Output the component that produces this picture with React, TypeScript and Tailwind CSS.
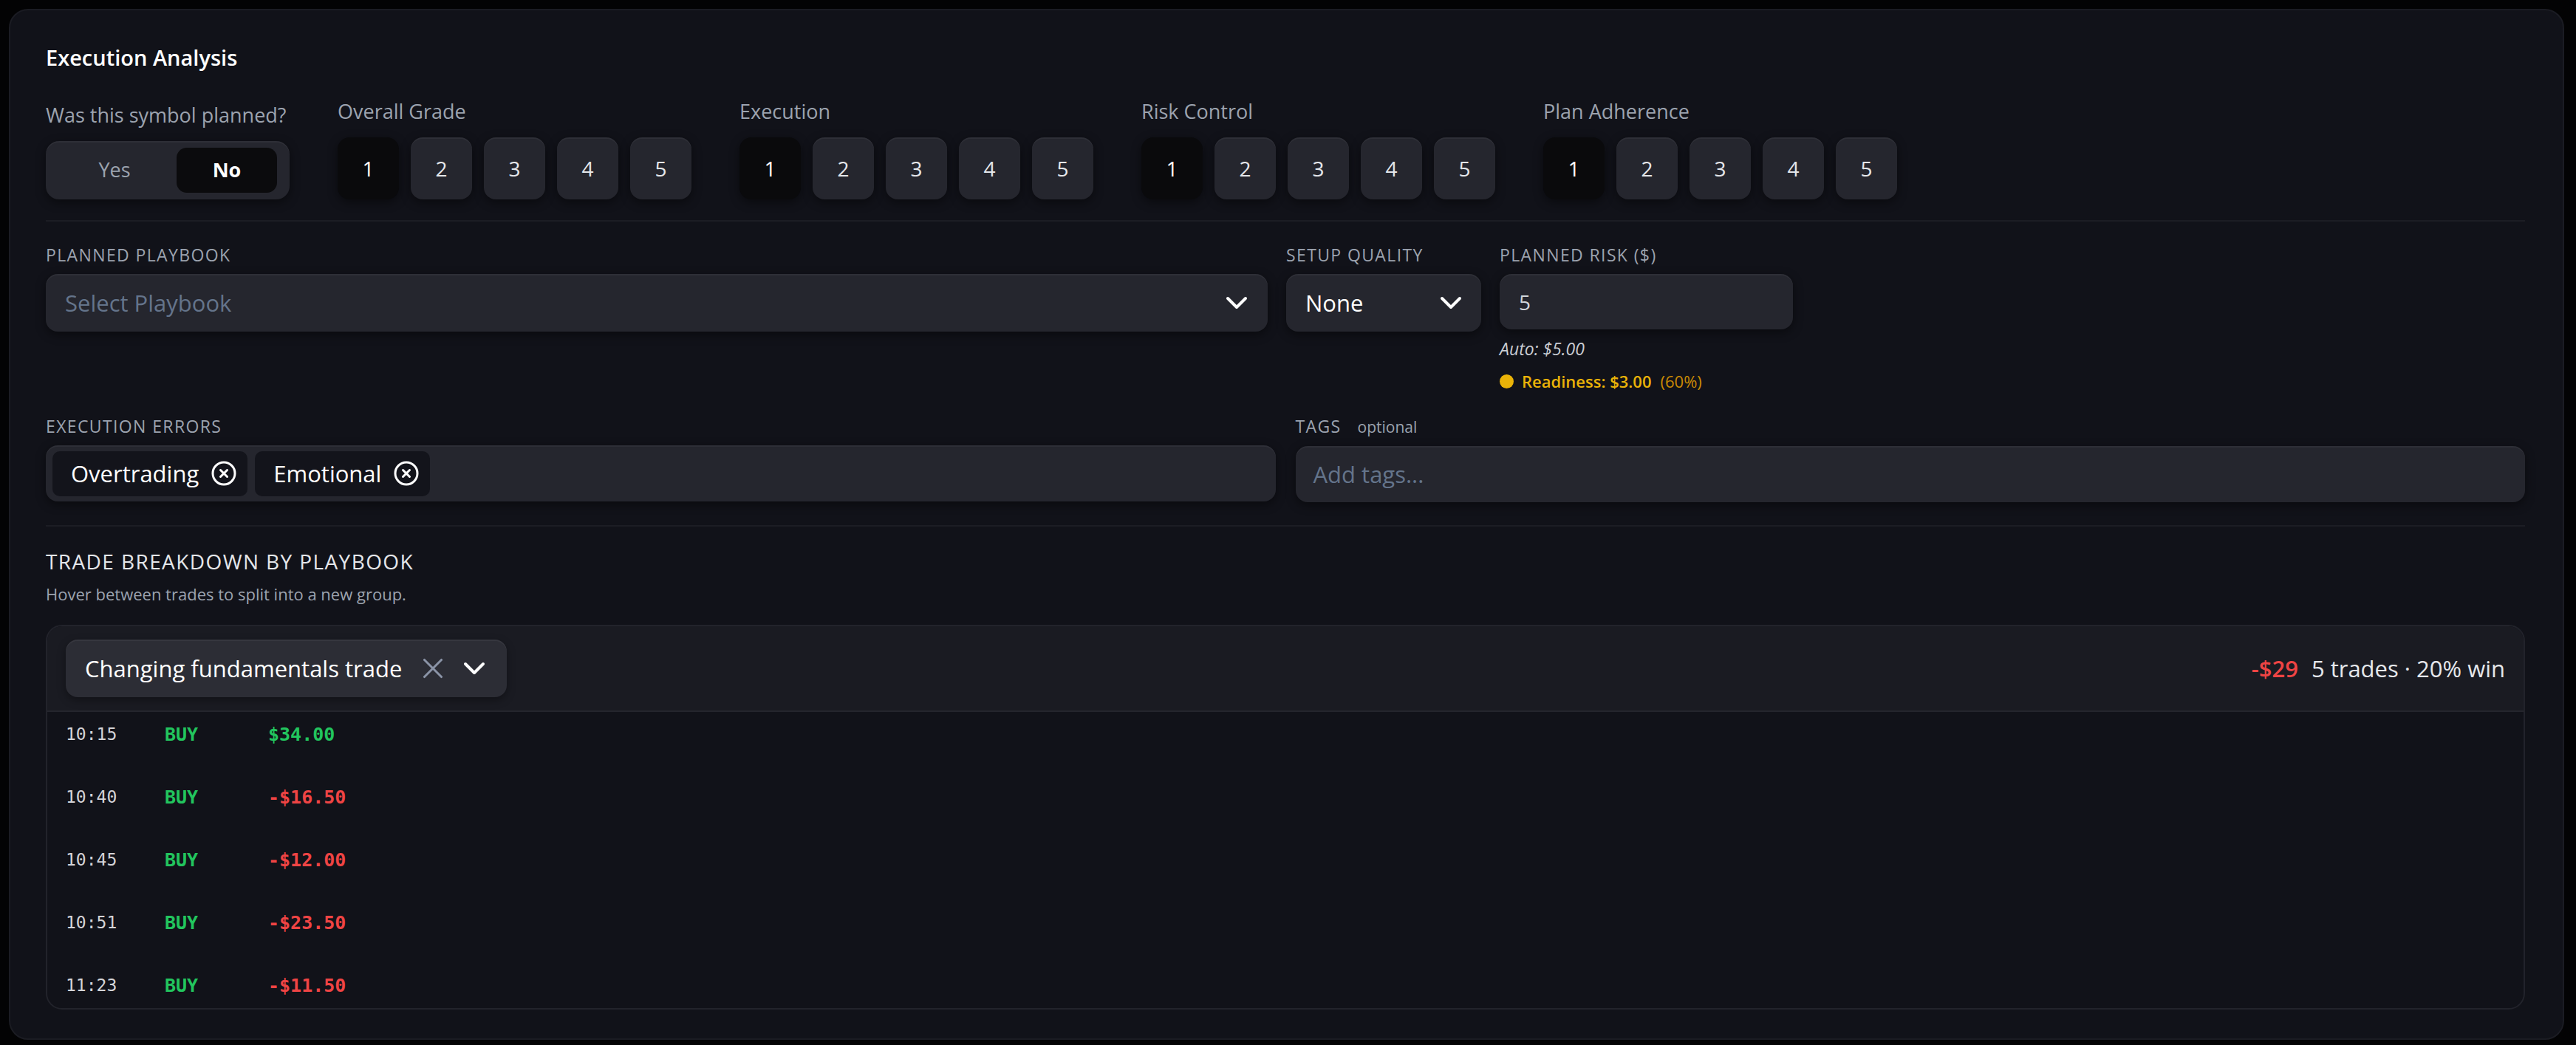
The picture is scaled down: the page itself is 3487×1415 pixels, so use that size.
import React from "react";
import { ChevronDown, X, CircleX } from "lucide-react";

const gradeGroups = ["Overall Grade", "Execution", "Risk Control", "Plan Adherence"];

const trades = [
  { time: "10:15", side: "BUY", pnl: "$34.00", win: true },
  { time: "10:40", side: "BUY", pnl: "-$16.50", win: false },
  { time: "10:45", side: "BUY", pnl: "-$12.00", win: false },
  { time: "10:51", side: "BUY", pnl: "-$23.50", win: false },
  { time: "11:23", side: "BUY", pnl: "-$11.50", win: false },
];

const fieldShadow =
  "shadow-[inset_0_2px_0_rgba(255,255,255,0.045),0_4px_14px_rgba(0,0,0,0.45)]";

const GradeScale: React.FC<{ label: string; selected: number }> = ({ label, selected }) => (
  <div className="flex flex-col">
    <span className="mb-[15px] text-[27px] leading-[40px] text-[#9ca3af]">{label}</span>
    <div className="flex gap-[16px]">
      {[1, 2, 3, 4, 5].map((n) => (
        <button
          key={n}
          type="button"
          className={
            n === selected
              ? "flex h-[84px] w-[83px] items-center justify-center rounded-[16px] bg-[#0a0a0c] text-[28px] font-medium text-white shadow-[0_4px_14px_rgba(0,0,0,0.45)]"
              : `flex h-[84px] w-[83px] items-center justify-center rounded-[16px] bg-[#25262e] text-[28px] font-medium text-[#e5e7eb] ${fieldShadow}`
          }
        >
          {n}
        </button>
      ))}
    </div>
  </div>
);

const FieldLabel: React.FC<{ children: React.ReactNode }> = ({ children }) => (
  <span className="mb-[10px] block text-[23px] uppercase leading-[32px] tracking-[0.06em] text-[#9ca3af]">
    {children}
  </span>
);

export default function App() {
  return (
    <div className="min-h-screen bg-[#030304] pb-[8px] pl-[12px] pr-[16px] pt-[12px] font-['Open_Sans',sans-serif]">
      <div className="rounded-[26px] border-2 border-[#1b1c23] bg-[#111219] pb-[39px] pl-[48px] pr-[51px] pt-[44px]">
        <h2 className="text-[29px] font-semibold leading-[40px] text-white">Execution Analysis</h2>

        {/* planned + grades */}
        <div className="mt-[33px] flex items-end gap-[65px]">
          <div className="flex flex-col">
            <span className="mb-[15px] text-[27px] leading-[40px] text-[#9ca3af]">
              Was this symbol planned?
            </span>
            <div className={`flex h-[79px] w-[330px] items-center rounded-[18px] bg-[#25262e] py-[9px] pl-[9px] pr-[17px] ${fieldShadow}`}>
              <button type="button" className="h-full flex-1 text-[27px] text-[#9ca3af]">
                Yes
              </button>
              <button
                type="button"
                className="h-full w-[136px] rounded-[14px] bg-[#0b0b0d] text-[27px] font-bold text-white"
              >
                No
              </button>
            </div>
          </div>
          {gradeGroups.map((g) => (
            <GradeScale key={g} label={g} selected={1} />
          ))}
        </div>

        <div className="mt-[28px] border-t-2 border-[#1c1d24]" />

        {/* playbook / quality / risk */}
        <div className="mt-[29px] grid grid-cols-[1654px_264px_397px] items-start gap-[25px]">
          <div>
            <FieldLabel>Planned Playbook</FieldLabel>
            <div className={`flex h-[78px] items-center justify-between rounded-[16px] bg-[#25262e] pl-[26px] pr-[18px] ${fieldShadow}`}>
              <span className="text-[31px] text-[#64748b]">Select Playbook</span>
              <ChevronDown size={48} strokeWidth={2} className="text-white" />
            </div>
          </div>
          <div>
            <FieldLabel>Setup Quality</FieldLabel>
            <div className={`flex h-[78px] items-center justify-between rounded-[16px] bg-[#25262e] pl-[26px] pr-[17px] ${fieldShadow}`}>
              <span className="text-[31px] text-white">None</span>
              <ChevronDown size={48} strokeWidth={2} className="text-white" />
            </div>
          </div>
          <div>
            <FieldLabel>Planned Risk ($)</FieldLabel>
            <div className={`flex h-[75px] items-center rounded-[16px] bg-[#25262e] pl-[26px] ${fieldShadow}`}>
              <span className="text-[28px] text-[#d1d5db]">5</span>
            </div>
            <p className="mt-[10px] text-[23px] italic leading-[32px] text-[#c9ccd3]">Auto: $5.00</p>
            <div className="mt-[12px] flex h-[32px] items-center">
              <span className="h-[19px] w-[19px] rounded-full bg-[#eab308]" />
              <span className="ml-[11px] text-[22px] font-semibold text-[#eab308]">Readiness: $3.00</span>
              <span className="ml-[12px] text-[22px] text-[#ca8a04]">(60%)</span>
            </div>
          </div>
        </div>

        {/* errors / tags */}
        <div className="mt-[29px] grid grid-cols-2 gap-[27px]">
          <div>
            <FieldLabel>Execution Errors</FieldLabel>
            <div className={`flex h-[76px] items-center gap-[10px] rounded-[16px] bg-[#25262e] px-[9px] ${fieldShadow}`}>
              {["Overtrading", "Emotional"].map((e) => (
                <span
                  key={e}
                  className="flex h-[61px] items-center gap-[16px] rounded-[10px] bg-[#13141b] pl-[25px] pr-[14px] text-[31px] text-white"
                >
                  {e}
                  <CircleX size={36} strokeWidth={2} />
                </span>
              ))}
            </div>
          </div>
          <div>
            <div className="mb-[10px] flex items-baseline leading-[32px]">
              <span className="text-[23px] uppercase tracking-[0.06em] text-[#9ca3af]">Tags</span>
              <span className="ml-[22px] text-[21px] text-[#9ca3af]">optional</span>
            </div>
            <div className={`flex h-[76px] items-center rounded-[16px] bg-[#25262e] px-[24px] ${fieldShadow}`}>
              <span className="text-[31px] text-[#64748b]">Add tags...</span>
            </div>
          </div>
        </div>

        <div className="mt-[31px] border-t-2 border-[#1c1d24]" />

        {/* breakdown */}
        <h3 className="mt-[27px] text-[28px] uppercase leading-[40px] tracking-[0.05em] text-[#e5e7eb]">
          Trade Breakdown by Playbook
        </h3>
        <p className="mt-[8px] text-[22px] leading-[32px] text-[#9ca3af]">
          Hover between trades to split into a new group.
        </p>

        <div className="mt-[26px] overflow-hidden rounded-[22px] border-2 border-[#22232b] bg-[#111219]">
          <div className="flex items-center justify-between border-b-2 border-[#24252d] bg-[#1a1b22] px-[25px] py-[18px]">
            <div className="flex h-[78px] items-center rounded-[16px] bg-[#2c2d35] pl-[26px] pr-[20px] shadow-[inset_0_2px_0_rgba(255,255,255,0.05),0_4px_12px_rgba(0,0,0,0.35)]">
              <span className="text-[31px] text-white">Changing fundamentals trade</span>
              <X size={46} strokeWidth={1.6} className="ml-[19px] text-[#8a93a6]" />
              <ChevronDown size={48} strokeWidth={2} className="ml-[9px] text-white" />
            </div>
            <div className="flex items-center text-[31px]">
              <span className="font-semibold text-[#ef4444]">-$29</span>
              <span className="ml-[18px] text-[#e5e7eb]">5 trades · 20% win</span>
            </div>
          </div>
          <div className="font-['DejaVu_Sans_Mono',monospace]">
            {trades.map((t, i) => (
              <React.Fragment key={t.time}>
                {i > 0 && <div className="h-[24px]" />}
                <div className="flex h-[61px] items-center pl-[25px]">
                  <span className="w-[134px] text-[23px] text-[#d4d4d8]">{t.time}</span>
                  <span className="w-[140px] text-[25px] font-bold text-[#22c55e]">{t.side}</span>
                  <span className={`text-[25px] font-bold ${t.win ? "text-[#22c55e]" : "text-[#ef4444]"}`}>
                    {t.pnl}
                  </span>
                </div>
              </React.Fragment>
            ))}
          </div>
        </div>
      </div>
    </div>
  );
}
